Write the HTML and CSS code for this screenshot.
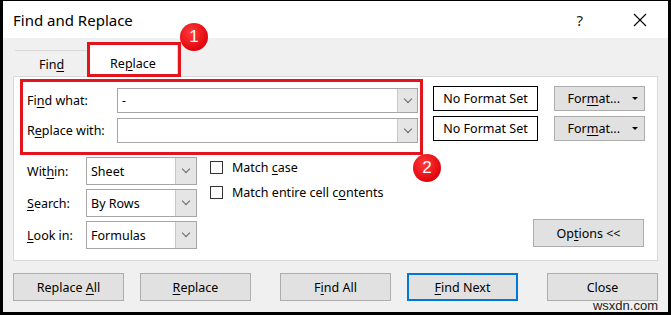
FILE: index.html
```html
<!DOCTYPE html>
<html lang="en">

<head>
    <meta charset="UTF-8">
    <meta name="viewport" content="width=device-width, initial-scale=1.0">
    <title>Find and Replace</title>
    <link rel="stylesheet" href="styles.css">
</head>

<body>
    <div class="dialog">
        <div class="titlebar">
            <span class="title">Find and Replace</span>
            <span class="help">?</span>
            <svg class="close" width="14" height="14" viewBox="0 0 14 14">
                <path d="M1 1 L13 13 M13 1 L1 13" stroke="#000" stroke-width="1.1" fill="none" />
            </svg>
        </div>

        <div class="body">
            <div class="tabs">
                <div class="tab"><span>Fin<u>d</u></span></div>
                <div class="tab active"><span>Re<u>p</u>lace</span></div>
            </div>

            <div class="panel">
                <div class="top">
                    <div class="hl">
                        <div class="row">
                            <label>Fi<u>n</u>d what:</label>
                            <div class="combo wide"><span class="val">-</span><span class="drop"><i class="chev"></i></span></div>
                        </div>
                        <div class="row">
                            <label>R<u>e</u>place with:</label>
                            <div class="combo wide"><span class="val"></span><span class="drop"><i class="chev"></i></span></div>
                        </div>
                    </div>
                    <div class="fmt">
                        <div class="row">
                            <div class="nofmt">No Format Set</div>
                            <div class="btn fmtbtn"><span>For<u>m</u>at...</span><span class="caret"></span></div>
                        </div>
                        <div class="row">
                            <div class="nofmt">No Format Set</div>
                            <div class="btn fmtbtn"><span>For<u>m</u>at...</span><span class="caret"></span></div>
                        </div>
                    </div>
                </div>

                <div class="lower">
                    <div class="opts">
                        <div class="row">
                            <label>Wit<u>h</u>in:</label>
                            <div class="combo small"><span class="val">Sheet</span><span class="drop"><i class="chev"></i></span></div>
                        </div>
                        <div class="row">
                            <label><u>S</u>earch:</label>
                            <div class="combo small"><span class="val">By Rows</span><span class="drop"><i class="chev"></i></span></div>
                        </div>
                        <div class="row">
                            <label><u>L</u>ook in:</label>
                            <div class="combo small"><span class="val">Formulas</span><span class="drop"><i class="chev"></i></span></div>
                        </div>
                    </div>
                    <div class="checks">
                        <div class="check"><span class="box"></span><span>Match <u>c</u>ase</span></div>
                        <div class="check"><span class="box"></span><span>Match entire cell c<u>o</u>ntents</span></div>
                    </div>
                    <div class="btn options"><span>Op<u>t</u>ions &lt;&lt;</span></div>
                </div>
            </div>

            <div class="actions">
                <div class="group">
                    <div class="btn"><span>Replace <u>A</u>ll</span></div>
                    <div class="btn"><span><u>R</u>eplace</span></div>
                </div>
                <div class="group">
                    <div class="btn"><span>F<u>i</u>nd All</span></div>
                    <div class="btn default"><span><u>F</u>ind Next</span></div>
                </div>
                <div class="btn"><span>Close</span></div>
            </div>
        </div>

        <span class="badge b1">1</span>
        <span class="badge b2">2</span>
        <span class="watermark">wsxdn.com</span>
    </div>
</body>

</html>
```

FILE: styles.css
```css
body {
    margin: 0;
}

.dialog {
    position: relative;
    width: 671px;
    height: 315px;
    box-sizing: border-box;
    border: 3px solid #000;
    border-top-width: 1px;
    background-color: #f0f0f0;
    font-family: "Noto Sans", "Open Sans", sans-serif;
    font-size: 12px;
    color: #000;
}

u {
    text-underline-offset: 2px;
}

.titlebar {
    display: flex;
    align-items: center;
    height: 37px;
    padding-left: 10px;
    background-color: #fff;
}

.title {
    font-size: 15px;
}

.help {
    margin-left: auto;
    font-size: 15px;
    color: #222;
}

.close {
    margin-left: 50px;
    margin-right: 21px;
}

.body {
    padding: 0 10px;
}

.tabs {
    display: flex;
    align-items: flex-end;
    height: 38px;
}

.tab {
    box-sizing: border-box;
    height: 26px;
    width: 73px;
    margin-left: 2px;
    padding-top: 1px;
    border-top: 1px solid #d9d9d9;
    display: flex;
    align-items: center;
    justify-content: center;
    font-size: 12.5px;
}

.tab.active {
    position: relative;
    z-index: 1;
    margin-left: 0;
    margin-bottom: -1px;
    width: 90px;
    height: 33px;
    padding-top: 5px;
    background-color: #fff;
    border: 1px solid #d9d9d9;
    border-bottom: none;
}

.tab.active::after {
    content: "";
    position: absolute;
    left: -2px;
    top: -3px;
    right: -4px;
    bottom: 0;
    border: 3px solid #e3141b;
}

.panel {
    box-sizing: border-box;
    height: 185px;
    background-color: #fff;
    border: 1px solid #d9d9d9;
}

.top {
    display: flex;
}

.hl {
    margin: 2px 0 0 6px;
    padding: 6px 2px 9px 4px;
    border: 3px solid #e3141b;
}

.row {
    display: flex;
    align-items: center;
}

.hl .row + .row,
.fmt .row + .row {
    margin-top: 5px;
}

.hl label {
    width: 90px;
    font-size: 12.5px;
}

.combo {
    box-sizing: border-box;
    display: flex;
    border: 1px solid #a6a6a6;
    background-color: #fff;
}

.combo .val {
    flex: 1;
    padding-left: 4px;
    display: flex;
    align-items: center;
}

.combo .drop {
    width: 19px;
    display: flex;
    align-items: center;
    justify-content: center;
    background-color: #e5e5e5;
    border-left: 1px solid #c8c8c8;
}

.chev {
    width: 5px;
    height: 5px;
    border-right: 1px solid #666;
    border-bottom: 1px solid #666;
    transform: translateY(-2px) rotate(45deg);
}

.combo.wide {
    width: 301px;
    height: 25px;
}

.combo.small {
    width: 111px;
    height: 28px;
    font-size: 12.5px;
}

.combo.small .drop {
    width: 20px;
}

.fmt {
    margin-left: 10px;
    padding-top: 9px;
}

.nofmt {
    box-sizing: border-box;
    width: 105px;
    height: 25px;
    border: 1px solid #000;
    display: flex;
    align-items: center;
    justify-content: center;
    font-size: 12.5px;
}

.btn {
    box-sizing: border-box;
    width: 111px;
    height: 28px;
    background-color: #e1e1e1;
    border: 1px solid #adadad;
    display: flex;
    align-items: center;
    justify-content: center;
    font-size: 12.5px;
}

.fmtbtn {
    width: 91px;
    height: 25px;
    margin-left: 16px;
    justify-content: flex-end;
    padding-right: 6px;
}

.caret {
    margin-left: 12px;
    border-left: 3px solid transparent;
    border-right: 3px solid transparent;
    border-top: 3px solid #000;
}

.lower {
    display: flex;
    margin-top: 2px;
    padding-left: 13px;
    padding-right: 13px;
}

.opts .row + .row {
    margin-top: 4px;
}

.opts label {
    width: 59px;
    font-size: 12.5px;
}

.checks {
    margin-left: 13px;
    padding-top: 4px;
}

.check {
    display: flex;
    align-items: center;
    height: 13px;
    font-size: 12.5px;
}

.check + .check {
    margin-top: 12px;
}

.box {
    box-sizing: border-box;
    width: 13px;
    height: 13px;
    border: 1px solid #333;
    margin-right: 9px;
    background-color: #fff;
}

.options {
    margin-left: auto;
    align-self: flex-end;
    margin-bottom: 2px;
}

.actions {
    display: flex;
    margin-top: 12px;
    gap: 29px;
}

.group {
    display: flex;
    gap: 16px;
}

.btn.default {
    border: 2px solid #0078d7;
}

.badge {
    position: absolute;
    width: 28px;
    height: 28px;
    border-radius: 50%;
    background: radial-gradient(circle at 40% 35%, #ff3a3a, #e0060e 70%);
    color: #fff;
    font-family: "Liberation Sans", sans-serif;
    font-size: 17px;
    display: flex;
    align-items: center;
    justify-content: center;
}

.b1 {
    left: 177px;
    top: 22px;
}

.b2 {
    left: 410px;
    top: 153px;
}

.watermark {
    position: absolute;
    right: 10px;
    bottom: -1px;
    font-family: "Liberation Sans", sans-serif;
    font-size: 13px;
    line-height: 14px;
    color: #222;
}
```
